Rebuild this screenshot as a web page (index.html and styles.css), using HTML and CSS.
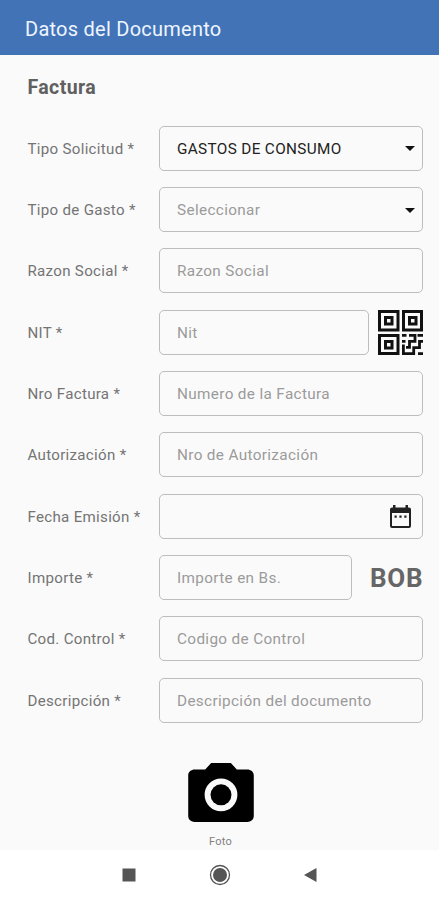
FILE: index.html
```html
<!DOCTYPE html>
<html lang="es">
<head>
<meta charset="utf-8">
<title>Datos del Documento</title>
<link rel="stylesheet" href="styles.css">
</head>
<body>
<div class="screen">
  <header class="appbar">Datos del Documento</header>
  <main class="content">
    <h1 class="title">Factura</h1>
    <form class="form">
      <div class="row"><span class="label">Tipo Solicitud *</span><div class="field"><span class="value">GASTOS DE CONSUMO</span><svg class="caret" viewBox="0 0 10 5"><path d="M0 0h10L5 5z"/></svg></div></div>
      <div class="row"><span class="label">Tipo de Gasto *</span><div class="field"><span>Seleccionar</span><svg class="caret" viewBox="0 0 10 5"><path d="M0 0h10L5 5z"/></svg></div></div>
      <div class="row"><span class="label">Razon Social *</span><div class="field">Razon Social</div></div>
      <div class="row"><span class="label">NIT *</span><div class="field">Nit</div>
        <svg class="qr" viewBox="0 0 45 45">
          <g fill="none" stroke="#111" stroke-width="3">
            <path d="M1.500 1.500h18.500v18.500H1.500zM25.500 1.500h18v18.500h-18zM1.500 25.500h18.500v18H1.500z"/>
            <path d="M7.500 7.500h6.500v6.500H7.500zM31.500 7.500H38v6.500h-6.500zM7.500 31.500h6.500V38H7.500z"/>
            <path stroke-width="2.800" d="M24 25.400h4.500M31 25.400h6v6h-5.500v6H28M39.500 25.400H45M24 31.400h3.500M45 31.400h-3.500v6.200h-5.800v6H25.400V34.500M40 43.600h5"/>
          </g>
        </svg>
      </div>
      <div class="row"><span class="label">Nro Factura *</span><div class="field">Numero de la Factura</div></div>
      <div class="row"><span class="label">Autorización *</span><div class="field">Nro de Autorización</div></div>
      <div class="row"><span class="label">Fecha Emisión *</span><div class="field">
        <svg class="calendar" viewBox="0 0 21 23"><path fill-rule="evenodd" d="M3 0h2.500v2.500h10V0H18v2.500h1a2 2 0 0 1 2 2V21a2 2 0 0 1-2 2H2a2 2 0 0 1-2-2V4.500a2 2 0 0 1 2-2h1zM2 8v13h17V8z"/><path d="M4.500 10.500h2.200v2.200H4.500zM9.400 10.500h2.200v2.200H9.400zM14.300 10.500h2.200v2.200h-2.200z"/></svg></div></div>
      <div class="row"><span class="label">Importe *</span><div class="field">Importe en Bs.</div><strong class="currency">BOB</strong></div>
      <div class="row"><span class="label">Cod. Control *</span><div class="field">Codigo de Control</div></div>
      <div class="row"><span class="label">Descripción *</span><div class="field">Descripción del documento</div></div>
    </form>
    <div class="photo">
      <svg class="camera" viewBox="2 2 20 18"><path fill-rule="evenodd" d="M9 2 7.170 4H4C2.900 4 2 4.700 2 5.800v12.400C2 19.300 2.900 20 4 20h16c1.100 0 2-.7 2-1.800V5.800C22 4.700 21.100 4 20 4h-3.170L15 2zm3 4.700a5 5 0 1 0 0 10 5 5 0 0 0 0-10z"/><circle cx="12" cy="11.700" r="3.200"/></svg>
      <span class="caption">Foto</span>
    </div>
  </main>
  <nav class="navbar">
    <svg viewBox="0 0 24 24"><path d="M5.500 5.500h13v13h-13z"/></svg>
    <svg viewBox="0 0 24 24"><circle cx="12" cy="12" r="9.500" fill="none" stroke="#555" stroke-width="1.300"/><circle cx="12" cy="12" r="7"/></svg>
    <svg viewBox="0 0 24 24"><path d="M18.500 5v14L6 12z"/></svg>
  </nav>
</div>
</body>
</html>
```
FILE: styles.css
```css
* { box-sizing: border-box; }
body { margin: 0; font-family: Roboto, "Liberation Sans", sans-serif; background: #fafafa; }
svg { display: block; flex: none; }
.screen { height: 900px; display: flex; flex-direction: column; overflow: hidden; }
.appbar { height: 55px; flex: none; padding: 2px 25px 0; display: flex; align-items: center; background: #4273b7; color: #eef5ff; font-size: 20px; letter-spacing: .25px; }
.content { height: 795px; flex: none; padding: 21px 16px 0 27.500px; overflow: hidden; }
.title { margin: 0; height: 24px; line-height: 24px; font-size: 19.500px; letter-spacing: .4px; font-weight: 700; color: #606060; }
.form { margin-top: 17.500px; }
.row { height: 61.350px; display: flex; align-items: center; }
.label { width: 131.500px; flex: none; padding-top: 1px; font-size: 15.100px; letter-spacing: .3px; color: #747474; white-space: nowrap; }
.field { flex: 1; height: 45px; padding: 1px 7px 0 17px; display: flex; align-items: center; justify-content: space-between; border: 1.500px solid #bdbdbd; border-radius: 5px; color: #9b9b9b; font-size: 15.300px; letter-spacing: .35px; white-space: nowrap; }
.value { color: #222; }
.caret { width: 10px; height: 5px; fill: #111; }
.qr { width: 45px; height: 45px; margin-left: 9px; }
.calendar { width: 21px; height: 23px; margin: 0 4px 0 auto; fill: #222; }
.currency { width: 53px; margin-left: 18px; padding-top: 1px; font-size: 26px; letter-spacing: .7px; color: #666; }
.photo { width: 66px; margin: 32px 0 0 160px; display: flex; flex-direction: column; align-items: center; }
.camera { width: 66px; height: 59px; }
.caption { margin-top: 13px; font-size: 11px; letter-spacing: .2px; line-height: 14px; color: #808080; }
.navbar { height: 50px; flex: none; padding: 0 117px; display: flex; align-items: center; justify-content: space-between; background: #fff; }
.navbar svg { width: 24px; height: 24px; fill: #555; }
```
